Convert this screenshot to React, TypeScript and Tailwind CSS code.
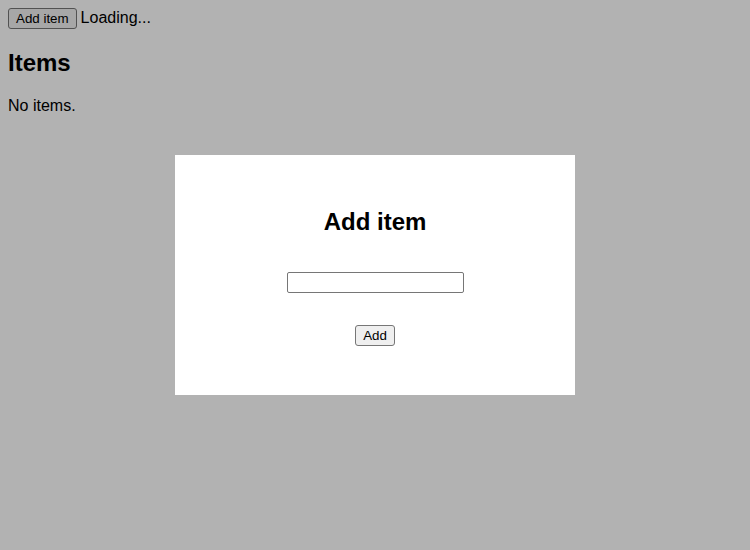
const btn = "inline-block h-[21px] px-[7px] border border-[#767676] rounded-[3px] bg-[#efefef] text-[13.33px] leading-[19px] text-black";

const AddItemModal = () => {
  return (
    <div className="fixed inset-0 bg-black/30 flex items-center justify-center">
      <div className="w-[400px] h-[240px] bg-white flex flex-col items-center pt-[32px]">
        <h2 className="mt-[21px] text-[24px] leading-[28px] font-bold">Add item</h2>
        <input type="text" className="mt-[36px] w-[177px] h-[21px] border border-[#767676] rounded-[2px] bg-white px-[2px] text-[13.33px]" />
        <button className={btn + " mt-[32px]"}>Add</button>
      </div>
    </div>
  );
};

const App = () => {
  return (
    <div className="min-h-[550px] bg-white text-black p-2 font-['Liberation_Sans',Arial,sans-serif] text-[16px]">
      <div className="flex items-baseline gap-[4px] leading-[18.4px]">
        <button className={btn}>Add item</button>
        <span>Loading...</span>
      </div>
      <h2 className="mt-[19.92px] text-[24px] leading-[27.6px] font-bold">Items</h2>
      <p className="mt-[20px] leading-[18.4px]">No items.</p>
      <AddItemModal />
    </div>
  );
};

export default App;
